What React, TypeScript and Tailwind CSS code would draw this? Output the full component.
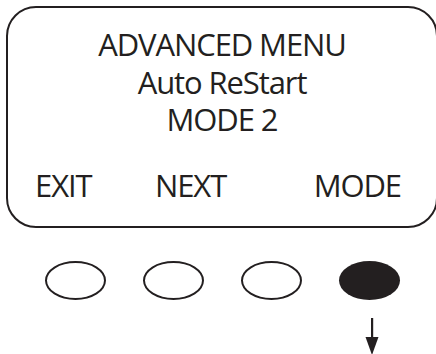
export default function App() {
  const font = { fontFamily: '"Open Sans", "Liberation Sans", sans-serif' };
  return (
    <div className="relative h-[354px] w-[436px] overflow-hidden bg-white text-[#231f20]" style={font}>
      <div className="ml-[6px] mt-[6px] h-[222px] w-[432px] rounded-[30px] border-2 border-[#231f20]">
        <div className="flex flex-col items-center pt-[18px] text-[31px] leading-[37.5px] tracking-[-1.1px]">
          <div>ADVANCED MENU</div>
          <div>Auto ReStart</div>
          <div>MODE 2</div>
        </div>
        <div className="mt-[28px] flex pl-[27px] text-[31px] leading-[37px] tracking-[-1.1px]">
          <span className="w-[120px]">EXIT</span>
          <span>NEXT</span>
          <span className="ml-auto mr-[35px]">MODE</span>
        </div>
      </div>
      <div className="mt-[33px] flex gap-[37px] pl-[45px]">
        <div className="h-[39px] w-[61px] rounded-[50%] border-2 border-[#231f20]" />
        <div className="h-[39px] w-[61px] rounded-[50%] border-2 border-[#231f20]" />
        <div className="h-[39px] w-[61px] rounded-[50%] border-2 border-[#231f20]" />
        <div className="h-[39px] w-[61px] rounded-[50%] bg-[#231f20]" />
      </div>
      <div className="ml-[365px] mt-[18px]">
        <svg width="14" height="37" viewBox="0 0 14 37">
          <rect x="6" y="0" width="2.2" height="22" fill="#231f20" />
          <path d="M0.5 19 L13.5 19 L7 37 Z" fill="#231f20" />
        </svg>
      </div>
    </div>
  );
}
